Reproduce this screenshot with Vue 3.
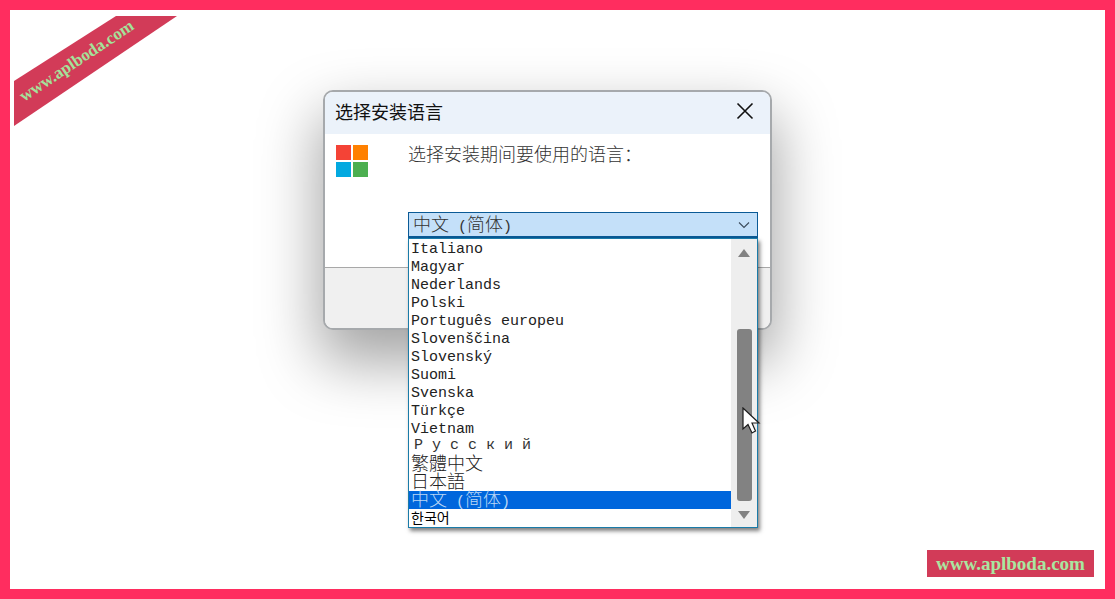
<template>
  <div class="page">
    <svg class="ribbon" width="170" height="112" viewBox="0 0 170 112">
      <polygon points="0,65 102,0 163,0 0,110" fill="#d23b58" />
      <text x="0" y="0" transform="translate(10 86) rotate(-33.5)" class="ribbon-text">www.aplboda.com</text>
    </svg>

    <div class="dialog">
      <div class="titlebar">
        <span class="title">选择安装语言</span>
        <svg class="close" width="18" height="18" viewBox="0 0 18 18">
          <path d="M1.5 1.5 L16.5 16.5 M16.5 1.5 L1.5 16.5" stroke="#111" stroke-width="1.6" fill="none" />
        </svg>
      </div>
      <div class="content">
        <div class="logo">
          <span class="sq red"></span>
          <span class="sq orange"></span>
          <span class="sq blue"></span>
          <span class="sq green"></span>
        </div>
        <div class="form">
          <p class="prompt">选择安装期间要使用的语言：</p>
          <div class="select">
            <span class="select-label">中文<span class="half"> (</span>简体<span class="half">)</span></span>
            <svg width="12" height="8" viewBox="0 0 12 8">
              <path d="M1 1.5 L6 6.5 L11 1.5" stroke="#3a4a5a" stroke-width="1.1" fill="none" />
            </svg>
          </div>
        </div>
      </div>
      <div class="footer"></div>

      <div class="dropdown">
        <ul class="options">
          <li v-for="lang in languages" :key="lang.name" :class="lang.kind">{{ lang.name }}</li>
          <li class="selected">中文<span class="half"> (</span>简体<span class="half">)</span></li>
          <li class="korean">한국어</li>
        </ul>
        <div class="scrollbar">
          <span class="arrow up"></span>
          <div class="track">
            <div class="thumb"></div>
          </div>
          <span class="arrow down"></span>
        </div>
      </div>
    </div>

    <svg class="cursor" width="20" height="30" viewBox="0 0 20 30">
      <path d="M1 1 L1 22 L6 17.5 L10 26 L13.5 24 L10 16 L17 16 Z" fill="#fff" stroke="#1c1c1c" stroke-width="1.2" />
    </svg>

    <div class="stamp">www.aplboda.com</div>
  </div>
</template>

<script setup>
const languages = [
  { name: 'Italiano' },
  { name: 'Magyar' },
  { name: 'Nederlands' },
  { name: 'Polski' },
  { name: 'Português europeu' },
  { name: 'Slovenščina' },
  { name: 'Slovenský' },
  { name: 'Suomi' },
  { name: 'Svenska' },
  { name: 'Türkçe' },
  { name: 'Vietnam' },
  { name: 'Русский', kind: 'russian' },
  { name: '繁體中文', kind: 'cjk' },
  { name: '日本語', kind: 'cjk' },
]
</script>

<style>
html, body {
  margin: 0;
  background: #fff;
}
</style>

<style scoped>
.page {
  position: relative;
  box-sizing: border-box;
  width: 1115px;
  height: 599px;
  overflow: hidden;
  background: #fff;
  border: 10px solid #ff2d5f;
  padding: 80px 0 0 313px;
  font-family: "Liberation Mono", "Noto Sans CJK SC", monospace;
}

.ribbon {
  position: absolute;
  left: 4px;
  top: 6px;
}

.ribbon-text {
  font-family: "Liberation Serif", serif;
  font-weight: bold;
  font-size: 17px;
  fill: #a4e29a;
}

.dialog {
  position: relative;
  box-sizing: border-box;
  width: 449px;
  height: 240px;
  display: flex;
  flex-direction: column;
  background: #fff;
  border: 2px solid #a6a9ac;
  border-radius: 10px;
  box-shadow: 0 28px 60px 4px rgba(0, 0, 0, 0.36);
}

.titlebar {
  flex: none;
  box-sizing: border-box;
  height: 42px;
  display: flex;
  align-items: center;
  justify-content: space-between;
  padding: 0 16px 4px 10px;
  background: #ebf2fa;
  border-radius: 8px 8px 0 0;
}

.title {
  font-family: "Noto Sans CJK SC", sans-serif;
  font-size: 18px;
  color: #111;
}

.close {
  display: block;
}

.content {
  flex: 1;
  display: flex;
  padding: 9px 12px 0 11px;
}

.logo {
  flex: none;
  width: 32px;
  height: 32px;
  display: grid;
  grid-template-columns: 15px 15px;
  grid-template-rows: 15px 15px;
  gap: 2px;
  margin-top: 2px;
}

.sq.red { background: #f44336; }
.sq.orange { background: #ff8000; }
.sq.blue { background: #03a9e0; }
.sq.green { background: #4caf50; }

.form {
  flex: 1;
  margin-left: 40px;
  display: flex;
  flex-direction: column;
}

.prompt {
  margin: 0;
  font-family: "Noto Sans CJK SC", sans-serif;
  font-weight: 300;
  font-size: 18px;
  line-height: 20px;
  color: #333;
  height: 69px;
}

.select {
  box-sizing: border-box;
  width: 350px;
  height: 26px;
  display: flex;
  align-items: center;
  justify-content: space-between;
  padding: 0 7px 0 4px;
  background: #c4e0f9;
  border: 1px solid #0a5a96;
  border-bottom-width: 2px;
  font-family: "Noto Sans CJK SC", sans-serif;
  font-weight: 300;
  font-size: 18px;
  color: #333;
}

.select-label {
  line-height: 18px;
  padding-top: 1px;
}

.half {
  font-family: "Liberation Mono", monospace;
  font-size: 15px;
  white-space: pre;
}

.footer {
  flex: none;
  height: 60px;
  background: #f0f0f0;
  border-top: 1px solid #a8a8a8;
  border-radius: 0 0 8px 8px;
}

.dropdown {
  position: absolute;
  left: 83px;
  top: 146px;
  box-sizing: border-box;
  width: 350px;
  height: 290px;
  display: flex;
  background: #fff;
  border: 1px solid #1a7ba8;
  box-shadow: 2px 3px 4px rgba(0, 0, 0, 0.5);
}

.options {
  list-style: none;
  margin: 0;
  padding: 0;
  flex: 1;
}

.options li {
  box-sizing: border-box;
  height: 18px;
  line-height: 18px;
  padding: 2px 0 0 2px;
  font-size: 15px;
  color: #222;
  white-space: nowrap;
}

.options li.russian {
  letter-spacing: 9px;
  padding: 0 0 0 5px;
  color: #333;
}

.options li.cjk {
  padding-top: 0;
  line-height: 15px;
  font-family: "Noto Sans CJK TC", sans-serif;
  font-weight: 300;
  font-size: 18px;
}

.options li.selected {
  padding-top: 0;
  line-height: 15px;
  background: #0066dc;
  color: #b9d6f5;
  font-family: "Noto Sans CJK SC", sans-serif;
  font-weight: 300;
  font-size: 18px;
}

.options li.korean {
  padding-top: 0;
  line-height: 16px;
  font-family: "Noto Sans CJK KR", sans-serif;
  font-size: 14px;
  color: #000;
}

.scrollbar {
  flex: none;
  width: 26px;
  display: flex;
  flex-direction: column;
  align-items: center;
  background: #eeeeee;
}

.track {
  flex: 1;
  width: 100%;
  display: flex;
  justify-content: center;
}

.thumb {
  width: 15px;
  height: 172px;
  margin-top: 72px;
  background: #828282;
  border-radius: 3px;
}

.arrow {
  flex: none;
  width: 0;
  height: 0;
  border-left: 6px solid transparent;
  border-right: 6px solid transparent;
}

.arrow.up {
  margin-top: 10px;
  border-bottom: 8px solid #828282;
}

.arrow.down {
  margin-bottom: 8px;
  border-top: 8px solid #828282;
}

.cursor {
  position: absolute;
  left: 732px;
  top: 397px;
}

.stamp {
  position: absolute;
  left: 917px;
  top: 540px;
  width: 167px;
  height: 27px;
  background: #d23b58;
  color: #a9e6a0;
  font-family: "Liberation Serif", serif;
  font-weight: bold;
  font-size: 19px;
  line-height: 27px;
  text-align: center;
}
</style>
